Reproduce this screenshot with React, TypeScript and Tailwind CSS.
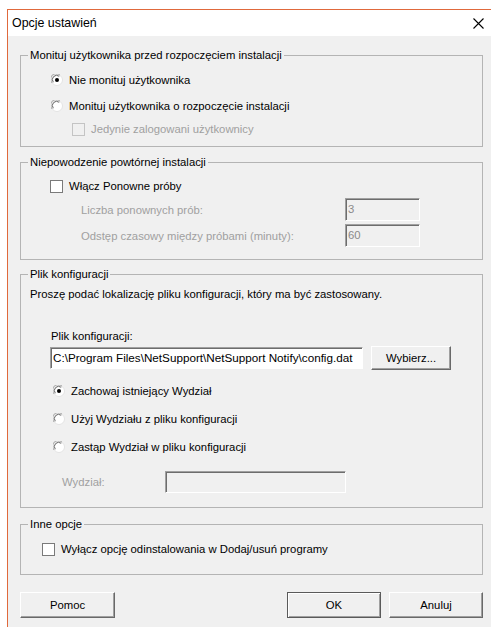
import React from 'react';

const txt = "text-[11.3px] leading-[14px]";
const on = `${txt} text-black`;
const off = `${txt} text-[#a0a0a0]`;

// classic sunken radio button
const Radio = ({ checked }: { checked?: boolean }) => (
  <svg width="12" height="12" viewBox="0 0 12 12" className="shrink-0">
    <circle cx="6" cy="6" r="5.5" fill="#fff" stroke="#e3e3e3" />
    <path d="M1.2 9 A5.3 5.3 0 0 1 9 1.2" fill="none" stroke="#a0a0a0" strokeWidth="1" />
    <path d="M2.3 8.2 A4.2 4.2 0 0 1 8.2 2.3" fill="none" stroke="#696969" strokeWidth="1" />
    {checked && <circle cx="6" cy="6" r="2" fill="#000" />}
  </svg>
);

const Check = ({ disabled }: { disabled?: boolean }) => (
  <span
    className={`block w-[13px] h-[13px] shrink-0 border ${
      disabled ? 'border-[#c4c4c4] bg-[#f0f0f0]' : 'border-[#7a7a7a] bg-white'
    }`}
  />
);

const Group = ({ title, className, children }: { title: string; className: string; children: React.ReactNode }) => (
  <fieldset className={`border border-[#b4b4b4] min-w-0 ${className}`}>
    <legend className={`ml-[7px] px-[2px] ${on}`}>{title}</legend>
    {children}
  </fieldset>
);

const Sunken = ({ value, white, className }: { value?: string; white?: boolean; className: string }) => (
  <div
    className={`flex items-center pl-[2px] overflow-hidden whitespace-nowrap border border-t-[#a0a0a0] border-l-[#a0a0a0] border-b-white border-r-white shadow-[inset_1px_1px_0_#6d6d6d] ${
      white ? 'bg-white text-black text-[11.7px]' : 'bg-[#f0f0f0] text-[#8a8a8a] text-[11.3px]'
    } ${className}`}
  >
    {value}
  </div>
);

const Btn = ({ label, def, className }: { label: string; def?: boolean; className: string }) => (
  <button
    className={`h-[26px] bg-[#f0f0f0] ${on} ${className} ${
      def
        ? 'border border-[#5a5a5a] shadow-[inset_1px_1px_0_#fff,inset_-1px_-1px_0_#a0a0a0]'
        : 'border border-t-white border-l-white border-b-[#696969] border-r-[#696969] shadow-[inset_-1px_-1px_0_#a0a0a0]'
    }`}
  >
    {label}
  </button>
);

export default function App() {
  return (
    <div className="min-h-screen bg-white pt-[9px] pl-[7px] font-['Liberation_Sans',Arial,sans-serif]">
      <div className="h-[618px] border-t border-l border-[#e0693c] bg-[#f0f0f0]">
        <div className="h-[26px] bg-white flex items-center justify-between pl-[4px] pr-[7px]">
          <span className="text-[12.4px] text-black">Opcje ustawień</span>
          <svg width="11" height="11" viewBox="0 0 11 11">
            <path d="M0.5 0.5 L10.5 10.5 M10.5 0.5 L0.5 10.5" stroke="#000" strokeWidth="1.1" />
          </svg>
        </div>

        <div className="pl-[12px] pr-[8px]">
          <Group title="Monituj użytkownika przed rozpoczęciem instalacji" className="mt-[12px] pb-[7px]">
            <div className="mt-[8px] pl-[30px] h-[20px] flex items-center gap-[6px]">
              <Radio checked />
              <span className={on}>Nie monituj użytkownika</span>
            </div>
            <div className="mt-[6px] pl-[30px] h-[20px] flex items-center gap-[6px]">
              <Radio />
              <span className={on}>Monituj użytkownika o rozpoczęcie instalacji</span>
            </div>
            <div className="mt-[3px] pl-[51px] h-[20px] flex items-center gap-[6px]">
              <Check disabled />
              <span className={off}>Jedynie zalogowani użytkownicy</span>
            </div>
          </Group>

          <Group title="Niepowodzenie powtórnej instalacji" className="mt-[8px] pb-[12px]">
            <div className="mt-[7px] pl-[29px] h-[20px] flex items-center gap-[6px]">
              <Check />
              <span className={on}>Włącz Ponowne próby</span>
            </div>
            <div className="mt-[2px] pl-[60px] flex items-center">
              <span className={`${off} w-[264px]`}>Liczba ponownych prób:</span>
              <Sunken value="3" className="w-[75px] h-[23px]" />
            </div>
            <div className="mt-[3px] pl-[60px] flex items-center">
              <span className={`${off} w-[264px]`}>Odstęp czasowy między próbami (minuty):</span>
              <Sunken value="60" className="w-[75px] h-[23px]" />
            </div>
          </Group>

          <Group title="Plik konfiguracji" className="mt-[7px] pb-[14px]">
            <p className={`mt-[6px] pl-[9px] ${on}`}>
              Proszę podać lokalizację pliku konfiguracji, który ma być zastosowany.
            </p>
            <p className={`mt-[28px] pl-[30px] ${on}`}>Plik konfiguracji:</p>
            <div className="mt-[3px] pl-[29px] h-[24px] flex items-center gap-[8px]">
              <Sunken value="C:\Program Files\NetSupport\NetSupport Notify\config.dat" white className="w-[313px] h-[22px]" />
              <button className={`w-[80px] h-[24px] bg-[#f0f0f0] border border-t-white border-l-white border-b-[#696969] border-r-[#696969] shadow-[inset_-1px_-1px_0_#a0a0a0] ${on}`}>
                Wybierz...
              </button>
            </div>
            <div className="mt-[11px] pl-[32px] h-[20px] flex items-center gap-[6px]">
              <Radio checked />
              <span className={on}>Zachowaj istniejący Wydział</span>
            </div>
            <div className="mt-[8px] pl-[32px] h-[20px] flex items-center gap-[6px]">
              <Radio />
              <span className={on}>Użyj Wydziału z pliku konfiguracji</span>
            </div>
            <div className="mt-[8px] pl-[32px] h-[20px] flex items-center gap-[6px]">
              <Radio />
              <span className={on}>Zastąp Wydział w pliku konfiguracji</span>
            </div>
            <div className="mt-[14px] pl-[41px] flex items-center">
              <span className={`${off} w-[103px]`}>Wydział:</span>
              <Sunken className="w-[181px] h-[22px]" />
            </div>
          </Group>

          <Group title="Inne opcje" className="mt-[9px] pb-[15px]">
            <div className="mt-[8px] pl-[21px] h-[20px] flex items-center gap-[6px]">
              <Check />
              <span className={on}>Wyłącz opcję odinstalowania w Dodaj/usuń programy</span>
            </div>
          </Group>

          <div className="mt-[17px] flex justify-between">
            <Btn label="Pomoc" className="w-[95px]" />
            <div className="flex gap-[8px]">
              <Btn label="OK" def className="w-[94px]" />
              <Btn label="Anuluj" className="w-[94px]" />
            </div>
          </div>
        </div>
      </div>
    </div>
  );
}
